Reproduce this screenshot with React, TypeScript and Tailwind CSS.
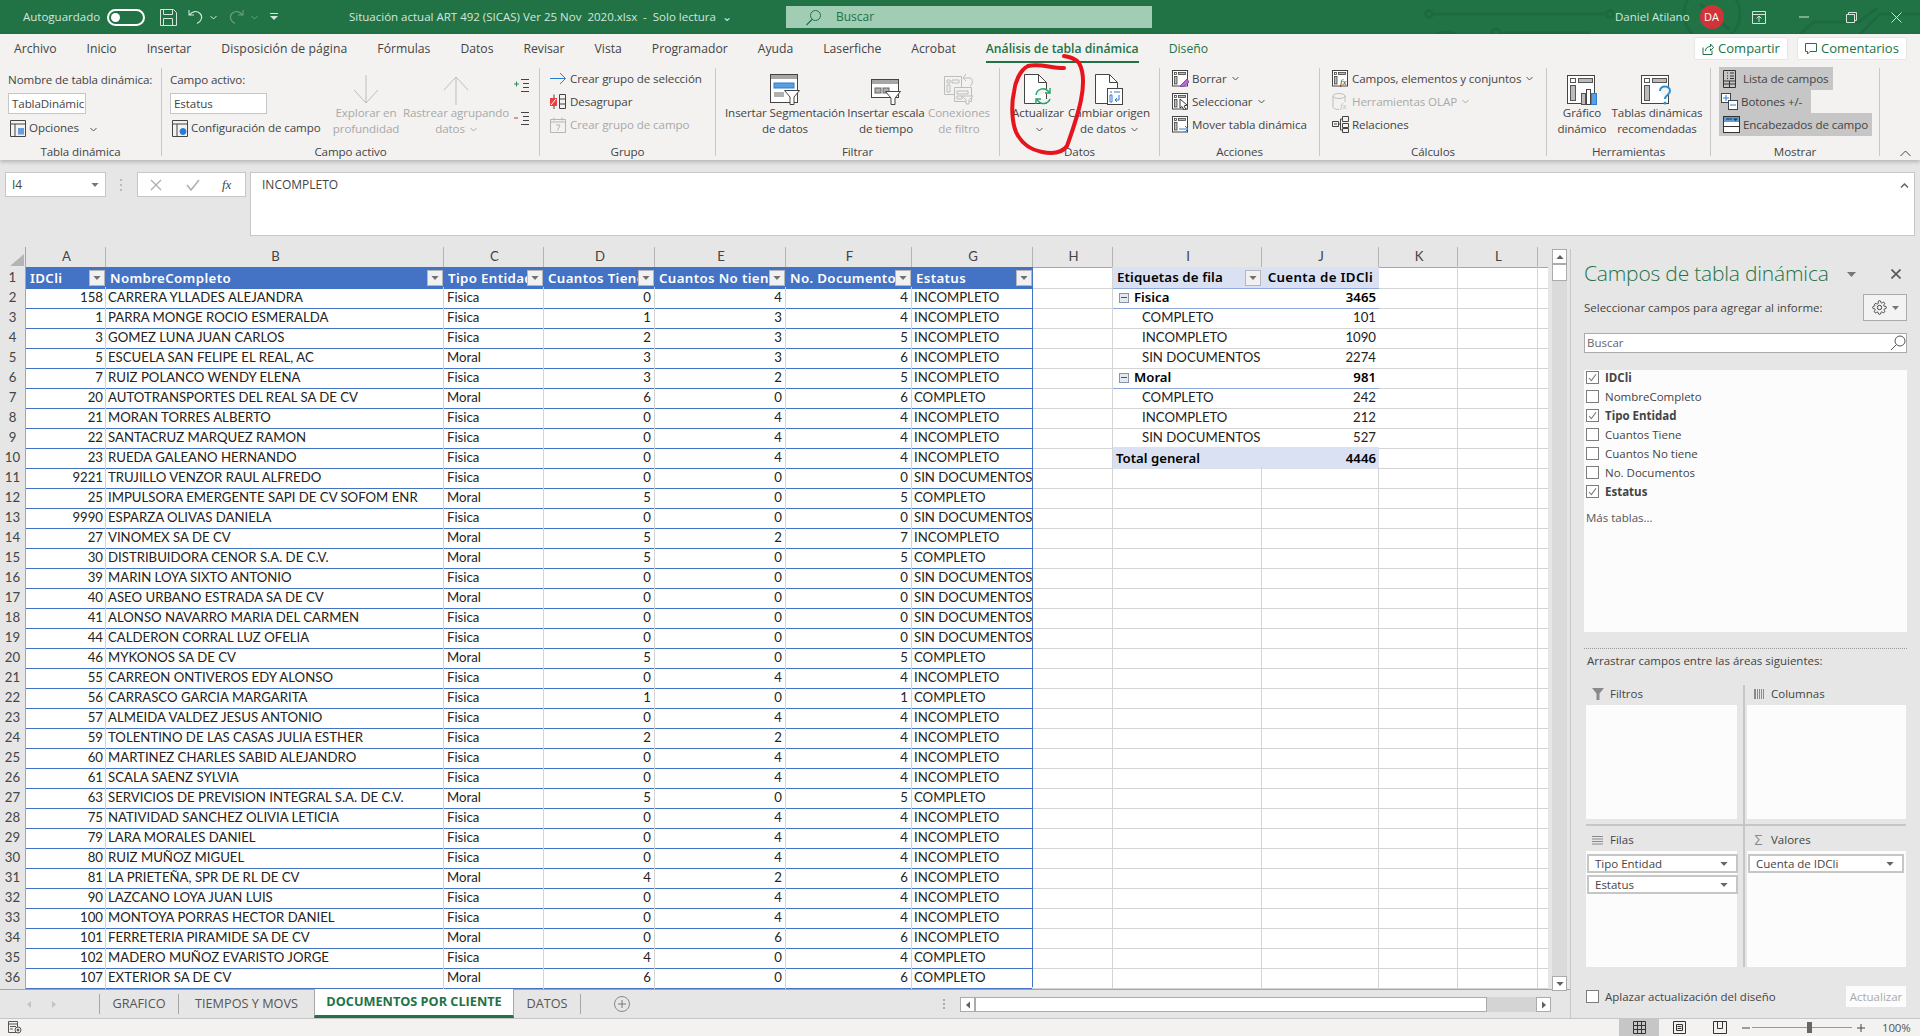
import React from "react";

type R = [number, number, string, string, number, number, number, string];
const I = "INCOMPLETO", C = "COMPLETO", S = "SIN DOCUMENTOS", F = "Fisica", M = "Moral";
const rows: R[] = [
  [2,158,"CARRERA YLLADES ALEJANDRA",F,0,4,4,I],[3,1,"PARRA MONGE ROCIO ESMERALDA",F,1,3,4,I],
  [4,3,"GOMEZ LUNA JUAN CARLOS",F,2,3,5,I],[5,5,"ESCUELA SAN FELIPE EL REAL, AC",M,3,3,6,I],
  [6,7,"RUIZ POLANCO WENDY ELENA",F,3,2,5,I],[7,20,"AUTOTRANSPORTES DEL REAL SA DE CV",M,6,0,6,C],
  [8,21,"MORAN TORRES ALBERTO",F,0,4,4,I],[9,22,"SANTACRUZ MARQUEZ RAMON",F,0,4,4,I],
  [10,23,"RUEDA GALEANO HERNANDO",F,0,4,4,I],[11,9221,"TRUJILLO VENZOR RAUL ALFREDO",F,0,0,0,S],
  [12,25,"IMPULSORA EMERGENTE SAPI DE CV SOFOM ENR",M,5,0,5,C],[13,9990,"ESPARZA OLIVAS DANIELA",F,0,0,0,S],
  [14,27,"VINOMEX SA DE CV",M,5,2,7,I],[15,30,"DISTRIBUIDORA CENOR S.A. DE C.V.",M,5,0,5,C],
  [16,39,"MARIN LOYA SIXTO ANTONIO",F,0,0,0,S],[17,40,"ASEO URBANO ESTRADA SA DE CV",M,0,0,0,S],
  [18,41,"ALONSO NAVARRO MARIA DEL CARMEN",F,0,0,0,S],[19,44,"CALDERON CORRAL LUZ OFELIA",F,0,0,0,S],
  [20,46,"MYKONOS SA DE CV",M,5,0,5,C],[21,55,"CARREON ONTIVEROS EDY ALONSO",F,0,4,4,I],
  [22,56,"CARRASCO GARCIA MARGARITA",F,1,0,1,C],[23,57,"ALMEIDA VALDEZ JESUS ANTONIO",F,0,4,4,I],
  [24,59,"TOLENTINO DE LAS CASAS JULIA ESTHER",F,2,2,4,I],[25,60,"MARTINEZ CHARLES SABID ALEJANDRO",F,0,4,4,I],
  [26,61,"SCALA SAENZ SYLVIA",F,0,4,4,I],[27,63,"SERVICIOS DE PREVISION INTEGRAL S.A. DE C.V.",M,5,0,5,C],
  [28,75,"NATIVIDAD SANCHEZ OLIVIA LETICIA",F,0,4,4,I],[29,79,"LARA MORALES DANIEL",F,0,4,4,I],
  [30,80,"RUIZ MUÑOZ MIGUEL",F,0,4,4,I],[31,81,"LA PRIETEÑA, SPR DE RL DE CV",M,4,2,6,I],
  [32,90,"LAZCANO LOYA JUAN LUIS",F,0,4,4,I],[33,100,"MONTOYA PORRAS HECTOR DANIEL",F,0,4,4,I],
  [34,101,"FERRETERIA PIRAMIDE SA DE CV",M,0,6,6,I],[35,102,"MADERO MUÑOZ EVARISTO JORGE",F,4,0,4,C],
  [36,107,"EXTERIOR SA DE CV",M,6,0,6,C],
];

const gridBase = "grid grid-cols-[26px_80px_338px_100px_111px_131px_126px_121px_80px_149px_117px_79px_80px_10px] h-[20px]";
const gridRow = `${gridBase} [&>*]:pt-[1px]`;
const cell = "border-r border-b border-[#d4d4d4] flex items-center overflow-hidden whitespace-nowrap px-[2px]";
const blueCell = "border-r border-b border-r-[#d4d4d4] border-b-[#4472c4] flex items-center overflow-hidden whitespace-nowrap px-[2px]";

const Tri = ({ c = "#666", w = 9, h = 5 }: { c?: string; w?: number; h?: number }) => (
  <svg width={w} height={h} viewBox="0 0 9 5" className="shrink-0"><path d="M0 0h9L4.5 5z" fill={c} /></svg>
);
const Chev = ({ c = "#555" }: { c?: string }) => (
  <svg width="7" height="5" viewBox="0 0 7 5" className="inline-block shrink-0 ml-[2px]"><path d="M.5 1l3 3 3-3" fill="none" stroke={c} /></svg>
);

const FilterBtn = () => (
  <div className="w-[16px] h-[16px] shrink-0 bg-[#f1f1f1] border border-[#b7b7b7] flex items-center justify-center">
    <Tri c="#707070" w={8} h={4} />
  </div>
);

/* Pivot-style list icon used across the ribbon */
const Pane = ({ dim, children }: { dim?: boolean; children?: React.ReactNode }) => {
  const s = dim ? "#bdbdbd" : "#444";
  return (
    <svg width="17" height="17" viewBox="0 0 17 17" className="shrink-0">
      <rect x=".5" y=".5" width="15" height="15.5" fill="#fff" stroke={s} />
      <rect x="2.5" y="2.5" width="2" height="2" fill="none" stroke={s} strokeWidth=".8" />
      <rect x="6.5" y="2.5" width="7" height="2" fill="#bbb" stroke={s} strokeWidth=".8" />
      <rect x="2.5" y="6.5" width="2.5" height="7.5" fill="#bbb" stroke={s} strokeWidth=".8" />
      {children}
    </svg>
  );
};

const Big = ({ w, children, lines, dim }: { w: string; children: React.ReactNode; lines: React.ReactNode[]; dim?: boolean }) => (
  <div className={`${w} shrink-0 flex flex-col items-center ${dim ? "text-[#a9a9a9]" : "text-[#444]"}`}>
    <div className="h-[33px] mt-[4px] flex items-end justify-center">{children}</div>
    {lines.map((l, i) => (
      <div key={i} className="h-[16px] leading-[16px] whitespace-nowrap">{l}</div>
    ))}
  </div>
);

const Small = ({ icon, text, dim, chev, hl }: { icon: React.ReactNode; text: string; dim?: boolean; chev?: boolean; hl?: string }) => (
  <div className={`h-[23px] flex items-center gap-[3px] whitespace-nowrap ${hl ?? ""} ${dim ? "text-[#a9a9a9]" : "text-[#444]"}`}>
    {icon}
    <span>{text}</span>
    {chev && <Chev c={dim ? "#aaa" : "#555"} />}
  </div>
);

const Group = ({ w, label, children }: { w: string; label: string; children: React.ReactNode }) => (
  <div className={`${w} shrink-0 h-[88px] border-r border-[#c8c8c8] flex flex-col`}>
    <div className="h-[76px] flex overflow-visible">{children}</div>
    <div className="h-[12px] leading-[16px] text-center text-[#444] whitespace-nowrap">{label}</div>
  </div>
);

const Check = ({ on }: { on?: boolean }) => (
  <div className="w-[13px] h-[13px] bg-white border border-[#7c7c7c] shrink-0 flex items-center justify-center">
    {on && <svg width="9" height="9" viewBox="0 0 9 9"><path d="M1 5l2.4 2.6L8 1.2" fill="none" stroke="#7a7a7a" strokeWidth="1.1" /></svg>}
  </div>
);

const AreaLabel = ({ icon, text }: { icon: React.ReactNode; text: string }) => (
  <div className="flex items-center h-[20px] pb-[2px] text-[#444]">
    <div className="w-[23px] flex justify-center">{icon}</div>
    <span className="ml-[1px]">{text}</span>
  </div>
);

const Chip = ({ t, w }: { t: string; w: string }) => (
  <div className={`${w} h-[19px] border-2 border-[#c6c6c6] bg-white flex items-center justify-between pl-[6px] pr-[8px] text-[#444]`}>
    <span>{t}</span><Tri c="#666" w={8} h={4} />
  </div>
);

const ScrollBtn = ({ dir, cls }: { dir: "u" | "d" | "l" | "r"; cls: string }) => {
  const d = { u: "M0 5h9L4.5 0z", d: "M0 0h9L4.5 5z", l: "M5 0v9L0 4.5z", r: "M0 0v9l5-4.5z" }[dir];
  const vb = dir === "u" || dir === "d" ? "0 0 9 5" : "0 0 5 9";
  return (
    <div className={`${cls} bg-white border border-[#ababab] flex items-center justify-center shrink-0`}>
      <svg width={dir === "u" || dir === "d" ? 8 : 4} height={dir === "u" || dir === "d" ? 4 : 8} viewBox={vb}><path d={d} fill="#606060" /></svg>
    </div>
  );
};

export default function App() {
  const ui = "[font-family:'Open_Sans','Noto_Sans',sans-serif]";
  return (
    <div className={`relative w-[1920px] h-[1036px] overflow-hidden bg-[#e6e6e6] text-[11.7px] ${ui}`}>
      {/* TITLE BAR */}
      <div className="relative h-[34px] bg-[#217346] flex items-center text-[#d4e6dc] text-[11.5px] overflow-hidden">
        <svg className="absolute left-0 top-0" width="1920" height="34" fill="none" stroke="#1e6a40" strokeWidth="3">
          <path d="M1434 14H1608" /><circle cx="1429" cy="14" r="3.5" /><circle cx="1610" cy="14" r="3.5" />
          <circle cx="1446" cy="50" r="18" /><circle cx="1496" cy="33" r="4" /><path d="M1500 33h90" />
          <circle cx="1712" cy="14" r="28" /><path d="M1700 4l30 26" /><path d="M1800 34l14-12h45l18-14" /><path d="M1860 34l20-20h40" />
        </svg>
        <div className="relative flex items-center w-full h-full pl-[23px]">
          <span className="w-[84px] whitespace-nowrap">Autoguardado</span>
          <div className="w-[38px] h-[17px] rounded-full border-2 border-white flex items-center pl-[2px]">
            <div className="w-[9px] h-[9px] rounded-full bg-white" />
          </div>
          <svg className="ml-[15px]" width="17" height="17" viewBox="0 0 17 17" fill="none" stroke="#d4e6dc">
            <path d="M.5.5h13l3 3v13H.5z" /><path d="M3.5.5v5h9v-5M3.5 16.5v-7h9v7" />
          </svg>
          <svg className="ml-[11px]" width="16" height="16" viewBox="0 0 16 16" fill="none" stroke="#d4e6dc" strokeWidth="1.1">
            <path d="M1 1v5h5M1.5 6C4 2 9 1.5 12 4.5s2 7.5-3 10" />
          </svg>
          <svg className="ml-[6px]" width="7" height="5" viewBox="0 0 7 5" fill="none" stroke="#d4e6dc"><path d="M.5 1l3 3 3-3" /></svg>
          <svg className="ml-[11px] opacity-40" width="16" height="16" viewBox="0 0 16 16" fill="none" stroke="#d4e6dc" strokeWidth="1.1">
            <path d="M15 1v5h-5M14.5 6C12 2 7 1.5 4 4.5s-2 7.5 3 10" />
          </svg>
          <svg className="ml-[7px] opacity-40" width="7" height="5" viewBox="0 0 7 5" fill="none" stroke="#d4e6dc"><path d="M.5 1l3 3 3-3" /></svg>
          <svg className="ml-[12px]" width="8" height="8" viewBox="0 0 8 8" fill="#d4e6dc"><path d="M0 0h8v1H0zM0 3h8L4 7z" /></svg>
          <span className="ml-[71px] w-[437px] whitespace-pre">Situación actual ART 492 (SICAS) Ver 25 Nov  2020.xlsx  -  Solo lectura  ⌄</span>
          <div className="w-[366px] h-[22px] bg-[#a0cdb4] flex items-center pl-[19px] text-[#217346] text-[12px]">
            <svg width="17" height="17" viewBox="0 0 17 17" fill="none" stroke="#217346"><circle cx="10.5" cy="6.5" r="5" /><path d="M7 10.5L1.5 16" strokeWidth="1.3" /></svg>
            <span className="ml-[14px]">Buscar</span>
          </div>
          <span className="ml-[463px] whitespace-nowrap">Daniel Atilano</span>
          <div className="ml-[10px] w-[24px] h-[24px] rounded-full bg-[#d13438] text-white flex items-center justify-center text-[11px]">DA</div>
          <svg className="ml-[28px]" width="14" height="13" viewBox="0 0 14 13" fill="none" stroke="#d4e6dc"><path d="M.5.5h13v12H.5zM.5 3.5h13M7 11V5.5M4.5 7.5L7 5l2.5 2.5" /></svg>
          <svg className="ml-[33px]" width="10" height="2" viewBox="0 0 10 2"><path d="M0 1h10" stroke="#d4e6dc" /></svg>
          <svg className="ml-[37px]" width="11" height="11" viewBox="0 0 11 11" fill="none" stroke="#d4e6dc"><path d="M.5 2.5h8v8h-8zM2.5 2.5v-2h8v8h-2" /></svg>
          <svg className="ml-[34px]" width="11" height="11" viewBox="0 0 11 11" fill="none" stroke="#d4e6dc"><path d="M.5.5l10 10M10.5.5l-10 10" /></svg>
        </div>
      </div>

      {/* RIBBON */}
      <div className="relative h-[126px] bg-[#f3f2f1] shadow-[0_2px_4px_rgba(0,0,0,0.22)] z-10">
        <div className="relative h-[30px] pt-[1px] flex items-center pl-[14px] gap-[30px] text-[12.2px] text-[#444] whitespace-nowrap">
          <span>Archivo</span><span>Inicio</span><span>Insertar</span><span className="tracking-[0.1px]">Disposición de página</span>
          <span>Fórmulas</span><span>Datos</span><span>Revisar</span><span>Vista</span><span>Programador</span>
          <span>Ayuda</span><span>Laserfiche</span><span>Acrobat</span>
          <span className="relative text-[#217346] font-semibold">Análisis de tabla dinámica
            <span className="absolute left-0 right-0 top-[21px] h-[2px] bg-[#217346]" /></span>
          <span className="text-[#217346]">Diseño</span>
          <div className="absolute right-[13px] top-[3px] flex gap-[9px] text-[#217346] text-[13px]">
            <div className="w-[94px] h-[23px] bg-white border border-[#e6e6e6] rounded-[2px] flex items-center justify-center gap-[4px]">
              <svg width="12" height="13" viewBox="0 0 12 13" fill="none" stroke="#217346"><path d="M1 5.5v7h9v-4M3.5 9c0-3 2-4.500 5-4.500V2l3 3.500-3 3V6.500" /></svg>Compartir
            </div>
            <div className="w-[110px] h-[23px] bg-white border border-[#e6e6e6] rounded-[2px] flex items-center justify-center gap-[4px]">
              <svg width="12" height="12" viewBox="0 0 12 12" fill="none" stroke="#217346"><path d="M.5.5h11v8H5L2.500 11V8.500h-2z" /></svg>Comentarios
            </div>
          </div>
        </div>
        <div className="flex mt-[4px] text-[11.6px] tracking-[-0.1px]">
          <Group w="w-[162px]" label="Tabla dinámica">
            <div className="pl-[8px] flex flex-col text-[#444]">
              <div className="h-[23px] flex items-center whitespace-nowrap">Nombre de tabla dinámica:</div>
              <div className="mt-[2px] w-[78px] h-[21px] bg-white border border-[#c6c6c6] pl-[3px] flex items-center overflow-hidden whitespace-nowrap">TablaDinámic</div>
              <div className="mt-[3px] h-[22px] pl-[2px] flex items-center gap-[3px]">
                <svg width="16" height="17" viewBox="0 0 16 17" fill="none" stroke="#444"><path d="M.5.5h15v16H.5zM.5 4h15M5 4v12.500" /><rect x="8" y="8" width="6" height="6.500" fill="#2b7cd3" stroke="none" opacity=".7" /></svg>
                <span>Opciones</span><span className="ml-[6px]"><Chev c="#555" /></span>
              </div>
            </div>
          </Group>
          <Group w="w-[378px]" label="Campo activo">
            <div className="w-[164px] pl-[8px] flex flex-col text-[#444] shrink-0">
              <div className="h-[23px] flex items-center">Campo activo:</div>
              <div className="mt-[2px] w-[97px] h-[21px] bg-white border border-[#c6c6c6] pl-[3px] flex items-center">Estatus</div>
              <div className="mt-[3px] h-[22px] pl-[2px] flex items-center gap-[3px] whitespace-nowrap">
                <svg width="16" height="17" viewBox="0 0 16 17" fill="none" stroke="#444"><path d="M.5.5h15v16H.5zM.5 4h15M5 4v12.500" /><circle cx="11" cy="11.500" r="3" fill="#2b7cd3" stroke="#2b7cd3" /></svg>
                <span>Configuración de campo</span>
              </div>
            </div>
            <Big w="w-[80px]" dim lines={["Explorar en", "profundidad"]}>
              <svg width="26" height="30" viewBox="0 0 26 30" fill="none" stroke="#bdbdbd"><path d="M13 0v28M1 15l12 13 12-13" /></svg>
            </Big>
            <Big w="w-[100px]" dim lines={["Rastrear agrupando", <>datos <Chev c="#aaa" /></>]}>
              <svg width="26" height="30" viewBox="0 0 26 30" fill="none" stroke="#bdbdbd"><path d="M13 30V2M1 15L13 2l12 13" /></svg>
            </Big>
            <div className="flex flex-col pl-[8px] pt-[11px] gap-[20px]">
              <svg width="16" height="13" viewBox="0 0 16 13"><path d="M0 5h5M2.500 2.500v5" stroke="#2e8b57" /><path d="M7 .5h8M9 4.500h6M9 8.500h6M7 12.500h8" stroke="#444" /></svg>
              <svg width="16" height="13" viewBox="0 0 16 13"><path d="M0 6h4" stroke="#d13438" /><path d="M7 .5h8M9 4.500h6M9 8.500h6M7 12.500h8" stroke="#444" /></svg>
            </div>
          </Group>
          <Group w="w-[176px]" label="Grupo">
            <div className="pl-[10px] flex flex-col -mt-[1px]">
              <Small text="Crear grupo de selección" icon={<svg width="17" height="13" viewBox="0 0 17 13" fill="none" stroke="#2b7cd3" className="shrink-0"><path d="M0 6.500h15M10 1l5.500 5.500L10 12" /></svg>} />
              <Small text="Desagrupar" icon={<svg width="17" height="16" viewBox="0 0 17 16" className="shrink-0" fill="none"><rect x="0" y="4" width="7" height="8" fill="#e84040" /><path d="M1 11l5-6" stroke="#fff" /><path d="M9.500.5h6v14h-6zM9.500 5h6M9.500 10h6M4 .5V4M4 12v3" stroke="#444" /></svg>} />
              <Small dim text="Crear grupo de campo" icon={<svg width="17" height="16" viewBox="0 0 17 16" className="shrink-0" fill="none" stroke="#b5b5b5"><path d="M.5 2.500h15v13H.5zM.5 5h15M4 .5v3M12 .5v3M6 8h4l-2.500 5.500" /></svg>} />
            </div>
          </Group>
          <Group w="w-[284px]" label="Filtrar">
            <div className="pl-[8px] flex">
              <Big w="w-[122px]" lines={["Insertar Segmentación", "de datos"]}>
                <svg width="30" height="31" viewBox="0 0 30 31" fill="none"><rect x=".5" y=".5" width="27" height="28" fill="#fff" stroke="#444" /><rect x="1" y="1" width="26" height="4" fill="#a6a6a6" /><rect x="4" y="9" width="20" height="5" fill="#5aa0dc" stroke="#2b7cd3" /><rect x="4" y="18" width="10" height="5" fill="#b0b0b0" /><path d="M14.500 16.500h15l-5.500 6.500v7.500h-4V23z" fill="#fff" stroke="#444" /></svg>
              </Big>
              <Big w="w-[80px]" lines={["Insertar escala", "de tiempo"]}>
                <svg width="30" height="26" viewBox="0 0 30 26" fill="none"><rect x=".5" y=".5" width="27" height="18" fill="#fff" stroke="#444" /><rect x="1" y="1" width="26" height="4" fill="#a6a6a6" /><rect x="4" y="9" width="6" height="5" fill="#b0b0b0" stroke="#666" /><rect x="12" y="9" width="6" height="5" fill="#b0b0b0" stroke="#666" /><path d="M14.500 12.500h15L24 19v6.500h-4V19z" fill="#fff" stroke="#444" /></svg>
              </Big>
              <Big w="w-[66px]" dim lines={["Conexiones", "de filtro"]}>
                <svg width="30" height="33" viewBox="0 0 30 33" fill="none" stroke="#bdbdbd"><path d="M.5 4.500h17v18H.5zM3 8h3v3H3zM8 8h7v3H8zM3 13h3v7H3z" /><path d="M10.500 15.500h17v14h-17zM13 19h11v3H13zM13 24h5v3h-5z" fill="#f3f2f1" /><path d="M18 24h11l-4 4v4h-3v-4z" fill="#f3f2f1" /><path d="M20 6h6c3 0 3 7 0 8M22 2l-3 4 3 3" /></svg>
              </Big>
            </div>
          </Group>
          <Group w="w-[160px]" label="Datos">
            <div className="pl-[8px] flex">
              <Big w="w-[60px]" lines={["Actualizar", <Chev c="#555" />]}>
                <svg width="29" height="31" viewBox="0 0 29 31" fill="none"><path d="M.5.5h14l8 8v21H.5z" fill="#fff" stroke="#444" /><path d="M14.500.5v8h8" stroke="#444" /><path d="M12 21a7 7 0 0 1 12-4l2 2M26 25a7 7 0 0 1-12 2l-2-2" fill="#f3f2f1" stroke="#21a366" strokeWidth="1.4" /><path d="M26 14v5h-5M12 30v-5h5" stroke="#21a366" strokeWidth="1.4" /></svg>
              </Big>
              <Big w="w-[82px]" lines={["Cambiar origen", <>de datos <Chev c="#555" /></>]}>
                <svg width="29" height="31" viewBox="0 0 29 31" fill="none"><path d="M.5.5h14l8 8v21H.5z" fill="#fff" stroke="#444" /><path d="M14.500.5v8h8" stroke="#444" /><rect x="12.500" y="14.500" width="15" height="16" fill="#fff" stroke="#444" /><path d="M15 18h2M19 18h6M15 21h2v7h-2zM24 21v5h-4M22 24l-2 2 2 2" stroke="#2b7cd3" /></svg>
              </Big>
            </div>
          </Group>
          <Group w="w-[160px]" label="Acciones">
            <div className="pl-[12px] flex flex-col -mt-[1px]">
              <Small chev text="Borrar" icon={<Pane><path d="M8 16l7-7 2 3-6 5z" fill="#b96bd1" stroke="#8e3fb0" /></Pane>} />
              <Small chev text="Seleccionar" icon={<Pane><path d="M8 6l7 6-3 1 2 3.500-2 .5-2-3.500L8 15z" fill="#fff" stroke="#333" /></Pane>} />
              <Small text="Mover tabla dinámica" icon={<Pane><path d="M7 13h9M13 10l3 3-3 3" fill="none" stroke="#2b7cd3" /></Pane>} />
            </div>
          </Group>
          <Group w="w-[227px]" label="Cálculos">
            <div className="pl-[12px] flex flex-col -mt-[1px]">
              <Small chev text="Campos, elementos y conjuntos" icon={<Pane><text x="8" y="15" fontSize="9" fontStyle="italic" fontFamily="Liberation Serif" fill="#333">fx</text></Pane>} />
              <Small dim chev text="Herramientas OLAP" icon={<svg width="17" height="17" viewBox="0 0 17 17" fill="none" stroke="#bdbdbd" className="shrink-0"><ellipse cx="7" cy="3" rx="6" ry="2.500" /><path d="M1 3v11c0 1.500 3 2.500 6 2.500M13 3v6" /><text x="8" y="16" fontSize="9" fontStyle="italic" fontFamily="Liberation Serif" fill="#bdbdbd" stroke="none">fx</text></svg>} />
              <Small text="Relaciones" icon={<svg width="17" height="17" viewBox="0 0 17 17" fill="none" stroke="#444" className="shrink-0"><path d="M.5 5.500h6v5h-6zM10.500.5h6v5h-6zM10.500 7.500h6v4h-6zM10.500 12.500h6v4h-6zM6.500 8h2M8.500 3v11M8.500 3h2M8.500 14h2M2 8h3" /></svg>} />
            </div>
          </Group>
          <Group w="w-[164px]" label="Herramientas">
            <div className="pl-[6px] flex">
              <Big w="w-[58px]" lines={["Gráfico", "dinámico"]}>
                <svg width="30" height="30" viewBox="0 0 30 30" fill="none"><rect x=".5" y=".5" width="27" height="28" fill="#fff" stroke="#444" /><rect x="3.500" y="3.500" width="5" height="4" stroke="#555" /><rect x="11.500" y="3.500" width="14" height="4" fill="#bbb" stroke="#555" /><rect x="3.500" y="10.500" width="5" height="15" fill="#bbb" stroke="#555" /><rect x="14.500" y="18.500" width="4" height="11" fill="#bbb" stroke="#555" /><rect x="19.500" y="14.500" width="4" height="15" fill="#fff" stroke="#444" /><rect x="24.500" y="18.500" width="5" height="11" fill="#5aa0dc" stroke="#2b7cd3" /></svg>
              </Big>
              <Big w="w-[92px]" lines={["Tablas dinámicas", "recomendadas"]}>
                <svg width="32" height="30" viewBox="0 0 32 30" fill="none"><rect x=".5" y=".5" width="27" height="28" fill="#fff" stroke="#444" /><rect x="3.500" y="3.500" width="5" height="4" stroke="#555" /><rect x="11.500" y="3.500" width="14" height="4" fill="#bbb" stroke="#555" /><rect x="3.500" y="10.500" width="5" height="15" fill="#bbb" stroke="#555" /><path d="M19 16c0-6 10-6 10 0 0 4-5 4-5 8" fill="#f3f2f1" stroke="#2b8fd3" strokeWidth="2" /><circle cx="24" cy="28" r="1.500" fill="#2b8fd3" /></svg>
              </Big>
            </div>
          </Group>
          <Group w="w-[169px]" label="Mostrar">
            <div className="pl-[8px] flex flex-col items-start -mt-[1px]">
              <Small hl="bg-[#c6c6c6] w-[114px] pl-[4px] gap-[7px]" text="Lista de campos" icon={<svg width="13" height="18" viewBox="0 0 13 18" fill="none" stroke="#333" className="shrink-0"><path d="M.5.5h12v17H.5zM.5 11h12M.5 14h12M6.500 11v6.500M4 3h1M7 3h4M4 6h1M7 6h4M4 8.500h1M7 8.500h4" /></svg>} />
              <Small hl="bg-[#c6c6c6] w-[92px] pl-[2px]" text="Botones +/-" icon={<svg width="17" height="17" viewBox="0 0 17 17" fill="none" className="shrink-0"><rect x=".5" y=".5" width="9" height="9" fill="#fff" stroke="#444" /><path d="M5 2v6M2 5h6" stroke="#2b7cd3" /><rect x="7.500" y="7.500" width="9" height="9" fill="#fff" stroke="#444" /><path d="M9 12h6" stroke="#2b7cd3" /></svg>} />
              <Small hl="bg-[#c6c6c6] w-[153px] pl-[4px]" text="Encabezados de campo" icon={<svg width="17" height="17" viewBox="0 0 17 17" fill="none" className="shrink-0"><rect x=".5" y=".5" width="16" height="16" fill="#fff" stroke="#333" /><rect x="1" y="1" width="15" height="5" fill="#5aa0dc" /><path d="M3 3h6" stroke="#333" /><path d="M10 2.500h5L12.500 5z" fill="#333" /><path d="M.5 10.500h16" stroke="#333" /></svg>} />
            </div>
          </Group>
          <div className="flex-1 h-[88px] flex items-end justify-end pr-[9px] pb-[0px]">
            <svg width="11" height="7" viewBox="0 0 11 7" fill="none" stroke="#444" className="-mb-[1px]"><path d="M.5 6l5-5 5 5" /></svg>
          </div>
        </div>
      </div>

      {/* FORMULA BAR */}
      <div className="h-[87px] pt-[12px] pl-[5px] flex items-start text-[12px] text-[#444]">
        <div className="w-[101px] h-[25px] bg-white border border-[#c6c6c6] flex items-center justify-between pl-[6px] pr-[6px]">I4<Tri c="#777" w={8} h={4} /></div>
        <div className="w-[31px] h-[25px] flex justify-center items-center"><svg width="3" height="12" viewBox="0 0 3 12" fill="#bbb"><rect width="2" height="2" /><rect y="5" width="2" height="2" /><rect y="10" width="2" height="2" /></svg></div>
        <div className="w-[109px] h-[25px] bg-white border border-[#c6c6c6] flex items-center pl-[12px]">
          <svg width="12" height="12" viewBox="0 0 12 12" fill="none" stroke="#b0b0b0" strokeWidth="1.4"><path d="M1 1l10 10M11 1L1 11" /></svg>
          <svg className="ml-[24px]" width="14" height="12" viewBox="0 0 14 12" fill="none" stroke="#b0b0b0" strokeWidth="1.6"><path d="M1 6l4 5 8-10" /></svg>
          <span className="ml-[22px] italic [font-family:'Liberation_Serif',serif] text-[13px] text-[#444]">fx</span>
        </div>
        <div className="ml-[4px] w-[1665px] h-[64px] bg-white border border-[#c6c6c6] flex items-start justify-between pl-[11px] pr-[5px] pt-[3px]">
          <span>INCOMPLETO</span>
          <svg className="mt-[7px]" width="9" height="5" viewBox="0 0 9 5" fill="none" stroke="#666" strokeWidth="1.5"><path d="M1 4.500L4.500 1 8 4.500" /></svg>
        </div>
      </div>

      {/* MAIN */}
      <div className="flex h-[771px]">
        <div className="w-[1570px] shrink-0 flex flex-col">
          <div className="flex h-[743px] items-start border-b border-[#a6a6a6]">
            <div className="w-[1548px] h-[742px] overflow-hidden shrink-0 bg-white text-[#222] text-[13.2px] [font-family:'Lato','Open_Sans',sans-serif]">
              {/* column letters */}
              <div className={`${gridBase} bg-[#e6e6e6] text-[#444]`}>
                <div className="border-r border-b border-[#a6a6a6] flex items-end justify-end p-[1px]"><div className="w-0 h-0 border-l-[14px] border-l-transparent border-b-[12px] border-b-[#b4b4b4]" /></div>
                {"ABCDEFGHIJKL".split("").map((l) => (
                  <div key={l} className="border-r border-b border-r-[#b4b4b4] border-b-[#a6a6a6] flex items-center justify-center pl-[2px]">{l}</div>
                ))}
                <div className="border-b border-[#a6a6a6]" />
              </div>
              {/* row 1 */}
              <div className={`${gridRow} [font-family:'Noto_Sans',sans-serif] font-semibold text-[13.3px] tracking-[0.35px]`}>
                <div className="border-r border-b border-[#a6a6a6] bg-[#e6e6e6] flex items-center justify-center text-[#444] font-normal [font-family:'Lato',sans-serif] text-[13.2px]">1</div>
                {["IDCli","NombreCompleto","Tipo Entidad","Cuantos Tiene","Cuantos No tiene","No. Documentos","Estatus"].map((h) => (
                  <div key={h} className="bg-[#4472c4] text-white flex items-center pl-[4px] overflow-hidden whitespace-nowrap border-r border-[#4472c4]">
                    <span className="flex-1 min-w-0 overflow-hidden">{h}</span><FilterBtn />
                  </div>
                ))}
                <div className={cell} />
                <div className="bg-[#d9e1f2] border-b border-[#8ea9db] flex items-center pl-[4px] pr-[1px] text-black tracking-[0.1px]"><span className="flex-1">Etiquetas de fila</span><FilterBtn /></div>
                <div className="bg-[#d9e1f2] border-b border-[#8ea9db] flex items-center justify-end pr-[6px] text-black whitespace-nowrap overflow-hidden">Cuenta de IDCli</div>
                <div className={cell} /><div className={cell} /><div className="border-b border-[#d4d4d4]" />
              </div>
              {rows.concat([[37,0,"","",0,0,0,""]]).map((r) => {
                const empty = r[0] === 37;
                const cb = empty ? cell : blueCell;
                const n = r[0];
                return (
                  <div key={n} className={gridRow}>
                    <div className="border-r border-b border-r-[#a6a6a6] border-b-[#c6c6c6] bg-[#e6e6e6] flex items-center justify-center text-[#444]">{n}</div>
                    <div className={`${cb} justify-end`}>{empty ? "" : r[1]}</div>
                    <div className={`${cb} px-[2px]`}>{r[2]}</div>
                    <div className={`${cb} pl-[3px]`}>{r[3]}</div>
                    <div className={`${cb} justify-end pr-[3px]`}>{empty ? "" : r[4]}</div>
                    <div className={`${cb} justify-end pr-[3px]`}>{empty ? "" : r[5]}</div>
                    <div className={`${cb} justify-end pr-[3px]`}>{empty ? "" : r[6]}</div>
                    <div className={empty ? cell : "border-r border-b border-[#4472c4] flex items-center overflow-hidden whitespace-nowrap px-[2px]"}>{r[7]}</div>
                    <div className={cell} />
                    <PivotI n={n} />
                    <PivotJ n={n} />
                    <div className={cell} /><div className={cell} /><div className="border-b border-[#d4d4d4]" />
                  </div>
                );
              })}
            </div>
            <div className="ml-[4px] mt-[2px] w-[15px] h-[742px] bg-[#dadada] flex flex-col shrink-0">
              <ScrollBtn dir="u" cls="h-[15px] w-[15px]" />
              <div className="w-[15px] h-[17px] bg-white border border-[#ababab]" />
              <div className="flex-1" />
              <ScrollBtn dir="d" cls="h-[15px] w-[15px]" />
            </div>
          </div>
          {/* SHEET TABS */}
          <div className="h-[28px] flex items-stretch text-[12.7px] text-[#555] relative">
            <div className="w-[100px] flex items-center pl-[27px] gap-[21px] border-r border-[#a6a6a6] my-[4px] shrink-0">
              <svg width="4" height="7" viewBox="0 0 4 7" fill="#c4c4c4"><path d="M4 0v7L0 3.500z" /></svg>
              <svg width="4" height="7" viewBox="0 0 4 7" fill="#c4c4c4"><path d="M0 0v7l4-3.500z" /></svg>
            </div>
            <div className="w-[79px] flex items-center justify-center border-r border-[#a6a6a6] my-[4px] shrink-0">GRAFICO</div>
            <div className="w-[135px] flex items-center justify-center shrink-0 my-[4px]">TIEMPOS Y MOVS</div>
            <div className="w-[200px] shrink-0 bg-white border-x border-[#a6a6a6] border-b-[3px] border-b-[#217346] flex items-center justify-center font-bold text-[#217346] -mt-[1px]">DOCUMENTOS POR CLIENTE</div>
            <div className="w-[67px] flex items-center justify-center border-r border-[#a6a6a6] my-[4px] shrink-0">DATOS</div>
            <div className="ml-[33px] flex items-center">
              <div className="w-[16px] h-[16px] rounded-full border border-[#888] flex items-center justify-center"><svg width="8" height="8" viewBox="0 0 8 8"><path d="M4 0v8M0 4h8" stroke="#777" /></svg></div>
            </div>
            <div className="ml-[313px] flex items-center"><svg width="3" height="10" viewBox="0 0 3 10" fill="#aaa"><rect width="2" height="2" /><rect y="4" width="2" height="2" /><rect y="8" width="2" height="2" /></svg></div>
            <div className="ml-[14px] mt-[7px] w-[591px] h-[15px] bg-[#d4d4d4] flex">
              <ScrollBtn dir="l" cls="w-[15px] h-[15px]" />
              <div className="w-[512px] h-[15px] bg-white border border-[#ababab]" />
              <div className="flex-1" />
              <ScrollBtn dir="r" cls="w-[15px] h-[15px]" />
            </div>
          </div>
        </div>

        {/* PANEL */}
        <div className="w-[350px] h-[769px] mt-[2px] border-l border-[#c6c6c6] pl-[13px] pr-[13px] pt-[9px] flex flex-col text-[#444] text-[11.5px]">
          <div className="h-[30px] mt-[1px] flex items-center text-[#217346] text-[21px] font-light whitespace-nowrap tracking-[-0.2px]">
            <span className="flex-1">Campos de tabla dinámica</span>
            <span className="mr-[35px]"><Tri c="#777" w={9} h={5} /></span>
            <svg className="mr-[6px]" width="10" height="10" viewBox="0 0 10 10" fill="none" stroke="#555" strokeWidth="1.6"><path d="M.5.5l9 9M9.500.5l-9 9" /></svg>
          </div>
          <div className="mt-[5px] h-[27px] flex items-center justify-between">
            <span>Seleccionar campos para agregar al informe:</span>
            <div className="w-[44px] h-[27px] border border-[#ababab] bg-[#f3f3f3] flex items-center justify-center gap-[5px]">
              <svg width="15" height="15" viewBox="0 0 24 24" fill="none" stroke="#444" strokeWidth="1.6"><circle cx="12" cy="12" r="3.500" /><path d="M19.400 15a1.650 1.650 0 0 0 .33 1.820l.06.06a2 2 0 1 1-2.830 2.830l-.06-.06a1.650 1.650 0 0 0-2.820 1.170V21a2 2 0 1 1-4 0v-.09a1.650 1.650 0 0 0-2.830-1.110l-.06.06a2 2 0 1 1-2.830-2.830l.06-.06A1.650 1.650 0 0 0 3.090 14H3a2 2 0 1 1 0-4h.09A1.650 1.650 0 0 0 4.600 9l-.06-.06a2 2 0 1 1 2.830-2.830l.06.06A1.650 1.650 0 0 0 10 4.600V3a2 2 0 1 1 4 0v.09a1.650 1.650 0 0 0 2.820 1.170l.06-.06a2 2 0 1 1 2.830 2.830l-.06.06A1.650 1.650 0 0 0 19.400 10H21a2 2 0 1 1 0 4h-.09a1.650 1.650 0 0 0-1.510 1z" /></svg>
              <Tri c="#777" w={7} h={4} />
            </div>
          </div>
          <div className="mt-[12px] h-[20px] bg-white border border-[#ababab] flex items-center justify-between pl-[2px] text-[#666] shrink-0">
            <span>Buscar</span>
            <svg width="16" height="16" viewBox="0 0 16 16" fill="none" stroke="#555"><circle cx="10" cy="6" r="5" /><path d="M6.500 9.500L1 15" /></svg>
          </div>
          <div className="mt-[17px] h-[262px] bg-[#fcfcfc] pl-[2px] flex flex-col shrink-0">
            <div className="-mt-[2px] flex flex-col">
              {([["IDCli",1],["NombreCompleto",0],["Tipo Entidad",1],["Cuantos Tiene",0],["Cuantos No tiene",0],["No. Documentos",0],["Estatus",1]] as [string, number][]).map(([t,on]) => (
                <div key={t} className={`h-[19px] flex items-center gap-[6px] ${on ? "font-bold" : ""}`}><Check on={!!on} />{t}</div>
              ))}
            </div>
            <div className="mt-[8px] text-[#555]">Más tablas...</div>
          </div>
          <div className="mt-[16px] border-t border-dotted border-[#9a9a9a] h-0 shrink-0" />
          <div className="mt-[4px] h-[16px] leading-[16px] pl-[3px] shrink-0">Arrastrar campos entre las áreas siguientes:</div>
          <div className="mt-[16px] ml-[2px] grid grid-cols-[159px_161px] grid-rows-[141px_141px] shrink-0">
            <div className="border-r-2 border-b-2 border-[#c6c6c6] pr-[4px] pb-[5px] flex flex-col">
              <AreaLabel text="Filtros" icon={<svg width="12" height="12" viewBox="0 0 12 12" fill="#8a8a8a"><path d="M0 0h12L7.500 5.500V12h-3V5.500z" /></svg>} />
              <div className="flex-1 bg-[#fcfcfc] mr-[2px]" />
            </div>
            <div className="border-b-2 border-[#c6c6c6] pl-[2px] pb-[5px] flex flex-col">
              <AreaLabel text="Columnas" icon={<svg width="10" height="10" viewBox="0 0 10 10" fill="#8a8a8a"><path d="M0 0h2v10H0zM3 0h1v10H3zM5 0h1v10H5zM7 0h1v10H7zM9 0h1v10H9z" /></svg>} />
              <div className="flex-1 bg-[#fcfcfc]" />
            </div>
            <div className="border-r-2 border-[#c6c6c6] pr-[4px] pt-[5px] flex flex-col">
              <AreaLabel text="Filas" icon={<svg width="11" height="9" viewBox="0 0 11 9" fill="#8a8a8a"><path d="M0 0h11v1H0zM0 2.500h11v1H0zM0 5h11v1H0zM0 7.500h11v1H0z" /></svg>} />
              <div className="flex-1 bg-[#fcfcfc] mr-[2px] pt-[3px] pl-[1px] flex flex-col gap-[2px]">
                <Chip t="Tipo Entidad" w="w-[151px]" /><Chip t="Estatus" w="w-[151px]" />
              </div>
            </div>
            <div className="pl-[2px] pt-[5px] flex flex-col">
              <AreaLabel text="Valores" icon={<span className="text-[#8a8a8a] text-[14px] leading-none">Σ</span>} />
              <div className="flex-1 bg-[#fcfcfc] pt-[3px] pl-[1px]"><Chip t="Cuenta de IDCli" w="w-[156px]" /></div>
            </div>
          </div>
          <div className="mt-[19px] flex items-center h-[21px] pl-[2px] gap-[6px] shrink-0">
            <Check /><span className="flex-1">Aplazar actualización del diseño</span>
            <div className="w-[60px] h-[21px] bg-[#fcfcfc] flex items-center justify-center text-[#a9a9a9] mr-[1px]">Actualizar</div>
          </div>
        </div>
      </div>

      {/* STATUS BAR */}
      <div className="h-[18px] bg-[#f3f2f1] border-t border-[#c6c6c6] flex items-center pl-[8px] text-[#555] text-[11.5px]">
        <svg width="14" height="13" viewBox="0 0 14 13" fill="none" stroke="#555"><path d="M.5.5h9v11H.5zM.5 3h9M2 5.500h6M2 8h3" /><circle cx="10" cy="9" r="3" fill="#f3f2f1" /><circle cx="10" cy="9" r="1" fill="#555" /></svg>
        <div className="ml-[1597px] w-[40px] h-[17px] bg-[#c6c6c6] flex items-center justify-center">
          <svg width="13" height="13" viewBox="0 0 13 13" fill="none" stroke="#333"><path d="M.5.5h12v12H.5zM4.500.5v12M8.500.5v12M.5 4.500h12M.5 8.500h12" /></svg>
        </div>
        <svg className="ml-[14px]" width="13" height="13" viewBox="0 0 13 13" fill="none" stroke="#333"><path d="M.5.5h12v12H.5zM3.500 3.500h6v6h-6zM4.500 5.500h4M4.500 7.500h4" /></svg>
        <svg className="ml-[27px]" width="14" height="13" viewBox="0 0 14 13" fill="none" stroke="#333"><path d="M.5.5h13v12H.5zM4.500.5v7h5v-7" /></svg>
        <svg className="ml-[15px]" width="8" height="2" viewBox="0 0 8 2"><path d="M0 1h8" stroke="#444" /></svg>
        <div className="ml-[2px] w-[100px] flex items-center">
          <div className="w-[55px] h-px bg-[#999]" />
          <div className="w-[5px] h-[11px] bg-[#666]" />
          <div className="flex-1 h-px bg-[#999]" />
        </div>
        <svg className="ml-[5px]" width="8" height="8" viewBox="0 0 8 8"><path d="M4 0v8M0 4h8" stroke="#444" /></svg>
        <span className="ml-[17px] tracking-[-0.2px]">100%</span>
      </div>

      {/* HAND-DRAWN RED CIRCLE */}
      <svg className="absolute left-0 top-0 z-20 pointer-events-none" width="1920" height="1036" fill="none">
        <path d="M1064 68C1050 68 1040 63 1028 66 1020 70 1015 82 1014 92 1011 105 1012 122 1016 132 1022 145 1032 150 1042 152 1052 154 1062 153 1067 146 1072 132 1078 115 1081 100 1084 85 1084 72 1079 63 1075 58 1070 57 1064 56" stroke="#e6141c" strokeWidth="4" strokeLinecap="round" />
      </svg>
    </div>
  );
}

function PivotI({ n }: { n: number }) {
  const base = "border-r-0 flex items-center whitespace-nowrap overflow-hidden";
  const Minus = () => (
    <div className="w-[10px] h-[10px] bg-[#e4e8f0] border border-[#8a94a6] flex items-center justify-center ml-[6px] mr-[5px] shrink-0"><div className="w-[6px] h-px bg-[#555]" /></div>
  );
  const data: Record<number, React.ReactNode> = {
    2: <div className={`${base} border-b border-[#8ea9db] font-semibold [font-family:'Noto_Sans',sans-serif] text-black`}><Minus />Fisica</div>,
    3: <div className={`${base} border-b border-[#d4d4d4] pl-[29px]`}>COMPLETO</div>,
    4: <div className={`${base} border-b border-[#d4d4d4] pl-[29px]`}>INCOMPLETO</div>,
    5: <div className={`${base} border-b border-[#d4d4d4] pl-[29px]`}>SIN DOCUMENTOS</div>,
    6: <div className={`${base} border-b border-[#8ea9db] font-semibold [font-family:'Noto_Sans',sans-serif] text-black`}><Minus />Moral</div>,
    7: <div className={`${base} border-b border-[#d4d4d4] pl-[29px]`}>COMPLETO</div>,
    8: <div className={`${base} border-b border-[#d4d4d4] pl-[29px]`}>INCOMPLETO</div>,
    9: <div className={`${base} border-b border-[#8ea9db] pl-[29px]`}>SIN DOCUMENTOS</div>,
    10: <div className={`${base} bg-[#d9e1f2] pl-[3px] font-semibold [font-family:'Noto_Sans',sans-serif] text-black`}>Total general</div>,
  };
  return <>{data[n] ?? <div className={cell} />}</>;
}

function PivotJ({ n }: { n: number }) {
  const v: Record<number, string> = { 2: "3465", 3: "101", 4: "1090", 5: "2274", 6: "981", 7: "242", 8: "212", 9: "527", 10: "4446" };
  if (!v[n]) return <div className={cell} />;
  const bold = n === 2 || n === 6 || n === 10;
  const bb = n === 2 || n === 6 || n === 9 ? "border-b border-[#8ea9db]" : n === 10 ? "" : "border-b border-[#d4d4d4]";
  return (
    <div className={`flex items-center justify-end pr-[3px] ${bb} ${n === 10 ? "bg-[#d9e1f2]" : ""} ${bold ? "font-semibold [font-family:'Noto_Sans',sans-serif] text-black" : ""}`}>{v[n]}</div>
  );
}
